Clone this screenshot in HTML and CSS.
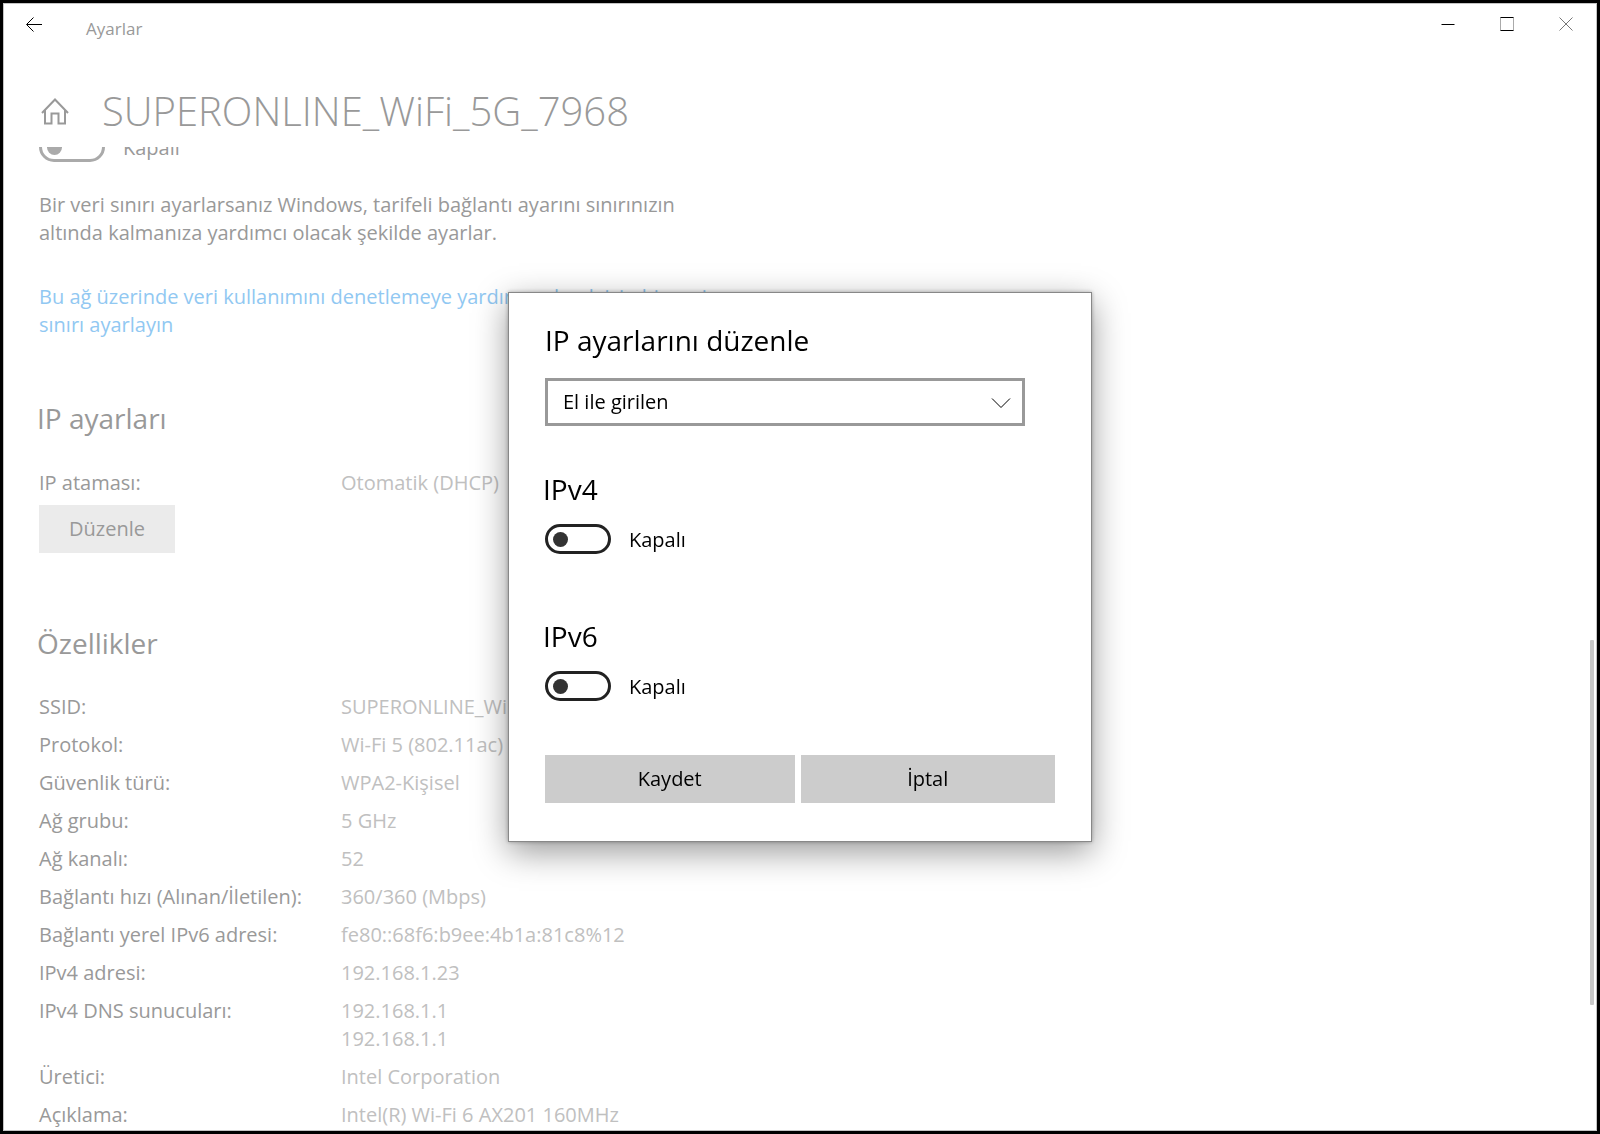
FILE: index.html
```html
<!DOCTYPE html>
<html lang="tr">
<head>
  <meta charset="UTF-8">
  <meta name="viewport" content="width=device-width, initial-scale=1.0">
  <title>Ayarlar</title>
  <link rel="stylesheet" href="styles.css">
</head>
<body>
  <div class="window">
    <header class="titlebar">
      <button type="button" class="back" aria-label="Geri">
        <svg width="16" height="16" viewBox="0 0 16 16"><path d="M16 8.5H1M7.5 1.5L0.5 8.5L7.5 15.5" /></svg>
      </button>
      <span class="app-name">Ayarlar</span>
      <div class="caption">
        <button type="button" aria-label="Simge durumuna küçült">
          <svg width="14" height="14" viewBox="0 0 14 14"><path d="M0.5 7.5H13.5" /></svg>
        </button>
        <button type="button" aria-label="Ekranı kapla">
          <svg width="14" height="14" viewBox="0 0 14 14"><path stroke="#aaa" d="M0.5 0.5V13.5M13.5 0.5V13.5" /><path d="M0.5 0.5H13.5M0.5 13.5H13.5" /></svg>
        </button>
        <button type="button" class="close" aria-label="Kapat">
          <svg width="14" height="14" viewBox="0 0 14 14"><path d="M0.5 0.5L13.5 13.5M13.5 0.5L0.5 13.5" /></svg>
        </button>
      </div>
    </header>

    <div class="page-header">
      <a href="#" class="home" aria-label="Giriş">
        <svg width="28" height="27" viewBox="0 0 28 27"><path d="M1 15L14 1.5L27 15M4 12.5V25.5H10.5V15.5H17.5V25.5H24V12.5" /></svg>
      </a>
      <h1>SUPERONLINE_WiFi_5G_7968</h1>
    </div>

    <main class="content">
      <div class="scrolled">
        <label class="toggle"><input type="checkbox" role="switch">Kapalı</label>
        <p class="info">Bir veri sınırı ayarlarsanız Windows, tarifeli bağlantı ayarını sınırınızın<br>altında kalmanıza yardımcı olacak şekilde ayarlar.</p>
        <p class="info"><a href="#">Bu ağ üzerinde veri kullanımını denetlemeye yardımcı olmak için bir veri<br>sınırı ayarlayın</a></p>

        <h2>IP ayarları</h2>
        <table>
          <tr><th scope="row">IP ataması:</th><td>Otomatik (DHCP)</td></tr>
        </table>
        <button type="button" class="edit">Düzenle</button>

        <h2>Özellikler</h2>
        <table>
          <tr><th scope="row">SSID:</th><td>SUPERONLINE_WiFi_5G_7968</td></tr>
          <tr><th scope="row">Protokol:</th><td>Wi-Fi 5 (802.11ac)</td></tr>
          <tr><th scope="row">Güvenlik türü:</th><td>WPA2-Kişisel</td></tr>
          <tr><th scope="row">Ağ grubu:</th><td>5 GHz</td></tr>
          <tr><th scope="row">Ağ kanalı:</th><td>52</td></tr>
          <tr><th scope="row">Bağlantı hızı (Alınan/İletilen):</th><td>360/360 (Mbps)</td></tr>
          <tr><th scope="row">Bağlantı yerel IPv6 adresi:</th><td>fe80::68f6:b9ee:4b1a:81c8%12</td></tr>
          <tr><th scope="row">IPv4 adresi:</th><td>192.168.1.23</td></tr>
          <tr><th scope="row">IPv4 DNS sunucuları:</th><td>192.168.1.1<br>192.168.1.1</td></tr>
          <tr><th scope="row">Üretici:</th><td>Intel Corporation</td></tr>
          <tr><th scope="row">Açıklama:</th><td>Intel(R) Wi-Fi 6 AX201 160MHz</td></tr>
        </table>
      </div>
    </main>
    <div class="scrollbar"></div>
  </div>

  <div class="overlay">
    <form class="dialog" role="dialog" aria-labelledby="dialog-title">
      <label id="dialog-title" class="dialog-title" for="ip-mode">IP ayarlarını düzenle</label>
      <div class="dropdown">
        <select id="ip-mode">
          <option>El ile girilen</option>
          <option>Otomatik (DHCP)</option>
        </select>
        <svg width="20" height="12" viewBox="0 0 20 12"><path d="M1 1.5L10 10.5L19 1.5" /></svg>
      </div>

      <h3>IPv4</h3>
      <label class="toggle"><input type="checkbox" role="switch">Kapalı</label>

      <h3>IPv6</h3>
      <label class="toggle"><input type="checkbox" role="switch">Kapalı</label>

      <div class="actions">
        <button type="submit">Kaydet</button>
        <button type="button">İptal</button>
      </div>
    </form>
  </div>
</body>
</html>
```

FILE: styles.css
```css
/* Reset */
* {
  margin: 0;
  padding: 0;
  box-sizing: border-box;
}

body {
  font-family: "Open Sans", "Noto Sans", sans-serif;
  font-size: 20px;
  line-height: 28px;
  color: #000;
  background: #000;
  padding: 3px;
}

button,
select {
  font: inherit;
  color: inherit;
  border: none;
  border-radius: 0;
}

svg {
  display: block;
  fill: none;
  stroke: currentColor;
}

/* Settings window */
.window {
  position: relative;
  display: flex;
  flex-direction: column;
  height: calc(100vh - 6px);
  border: 1px solid #c4c4c4;
  background: #fff;
  color: #999;
  overflow: hidden;
}

.titlebar {
  display: flex;
  height: 51px;
}

.titlebar button {
  display: flex;
  justify-content: center;
  align-items: center;
  width: 59px;
  height: 40px;
  background: none;
  color: #000;
}

.titlebar .back {
  width: 60px;
}

.titlebar .close {
  color: #777;
}

.app-name {
  margin: 11px 0 0 22px;
  font-size: 17px;
}

.caption {
  display: flex;
  margin: 0 1px 0 auto;
}

.page-header {
  display: flex;
  align-items: center;
  gap: 33px;
  height: 92px;
  padding: 20px 37px 0;
}

.home {
  color: #999;
}

.home path {
  stroke-width: 2;
}

h1 {
  font-size: 40px;
  font-weight: 300;
  line-height: 56px;
}

/* Page content, scrolled under the header */
.content {
  flex: 1;
  min-height: 0;
  overflow: hidden;
}

.scrolled {
  margin-top: -15px;
  padding: 0 35px;
}

.info {
  margin-top: 29px;
}

.info + .info {
  margin-top: 36px;
}

.info a {
  color: #91c8f2;
  text-decoration: none;
}

h2,
h3 {
  margin-left: -2px;
}

h2 {
  margin-top: 59px;
  margin-bottom: 26px;
  font-size: 28px;
  font-weight: 400;
  line-height: 40px;
}

table {
  border-collapse: collapse;
}

th,
td {
  padding: 5px 0;
  text-align: left;
  vertical-align: top;
  font-weight: 400;
}

th {
  width: 302px;
}

td {
  color: #c0c0c0;
}

.edit {
  display: block;
  height: 48px;
  padding: 0 30px;
  margin-top: 3px;
  background: #ebebeb;
}

.edit + h2 {
  margin-top: 70px;
  margin-bottom: 25px;
}

.scrollbar {
  position: absolute;
  top: 636px;
  right: 2px;
  width: 4px;
  height: 365px;
  border-radius: 1px;
  background: #c8c8c8;
}

/* Toggle switch */
.toggle {
  display: flex;
  align-items: flex-end;
  gap: 18px;
  height: 30px;
}

.toggle input {
  appearance: none;
  display: flex;
  align-items: center;
  width: 66px;
  height: 30px;
  padding-left: 5px;
  border: 3px solid #222;
  border-radius: 15px;
}

.toggle input::before {
  content: "";
  width: 15px;
  height: 15px;
  border-radius: 50%;
  background: #333;
}

.scrolled .toggle input {
  border-color: #aaa;
}

.scrolled .toggle input::before {
  background: #aaa;
}

/* Dialog */
.overlay {
  position: fixed;
  inset: 0;
  display: flex;
  justify-content: center;
  align-items: center;
}

.dialog {
  width: 584px;
  padding: 27px 36px 38px;
  border: 1px solid #888;
  background: #fff;
  box-shadow: 0 0 4px rgba(0, 0, 0, 0.3), 0 10px 32px rgba(0, 0, 0, 0.4);
}

.dialog-title,
h3 {
  display: block;
  font-size: 28px;
  font-weight: 400;
  line-height: 40px;
}

.dropdown {
  position: relative;
  width: 480px;
  max-width: 100%;
  margin: 18px 0 43px;
}

.dropdown select {
  appearance: none;
  display: block;
  width: 100%;
  height: 48px;
  padding: 0 15px;
  border: 3px solid #999;
  background: #fff;
}

.dropdown svg {
  position: absolute;
  top: 19px;
  right: 14px;
  pointer-events: none;
}

h3 {
  margin-bottom: 15px;
}

.toggle + h3 {
  margin-top: 62px;
}

.actions {
  display: grid;
  grid-template-columns: 50fr 51fr;
  gap: 6px;
  margin-top: 54px;
}

.actions button {
  height: 48px;
  background: #ccc;
}
```
